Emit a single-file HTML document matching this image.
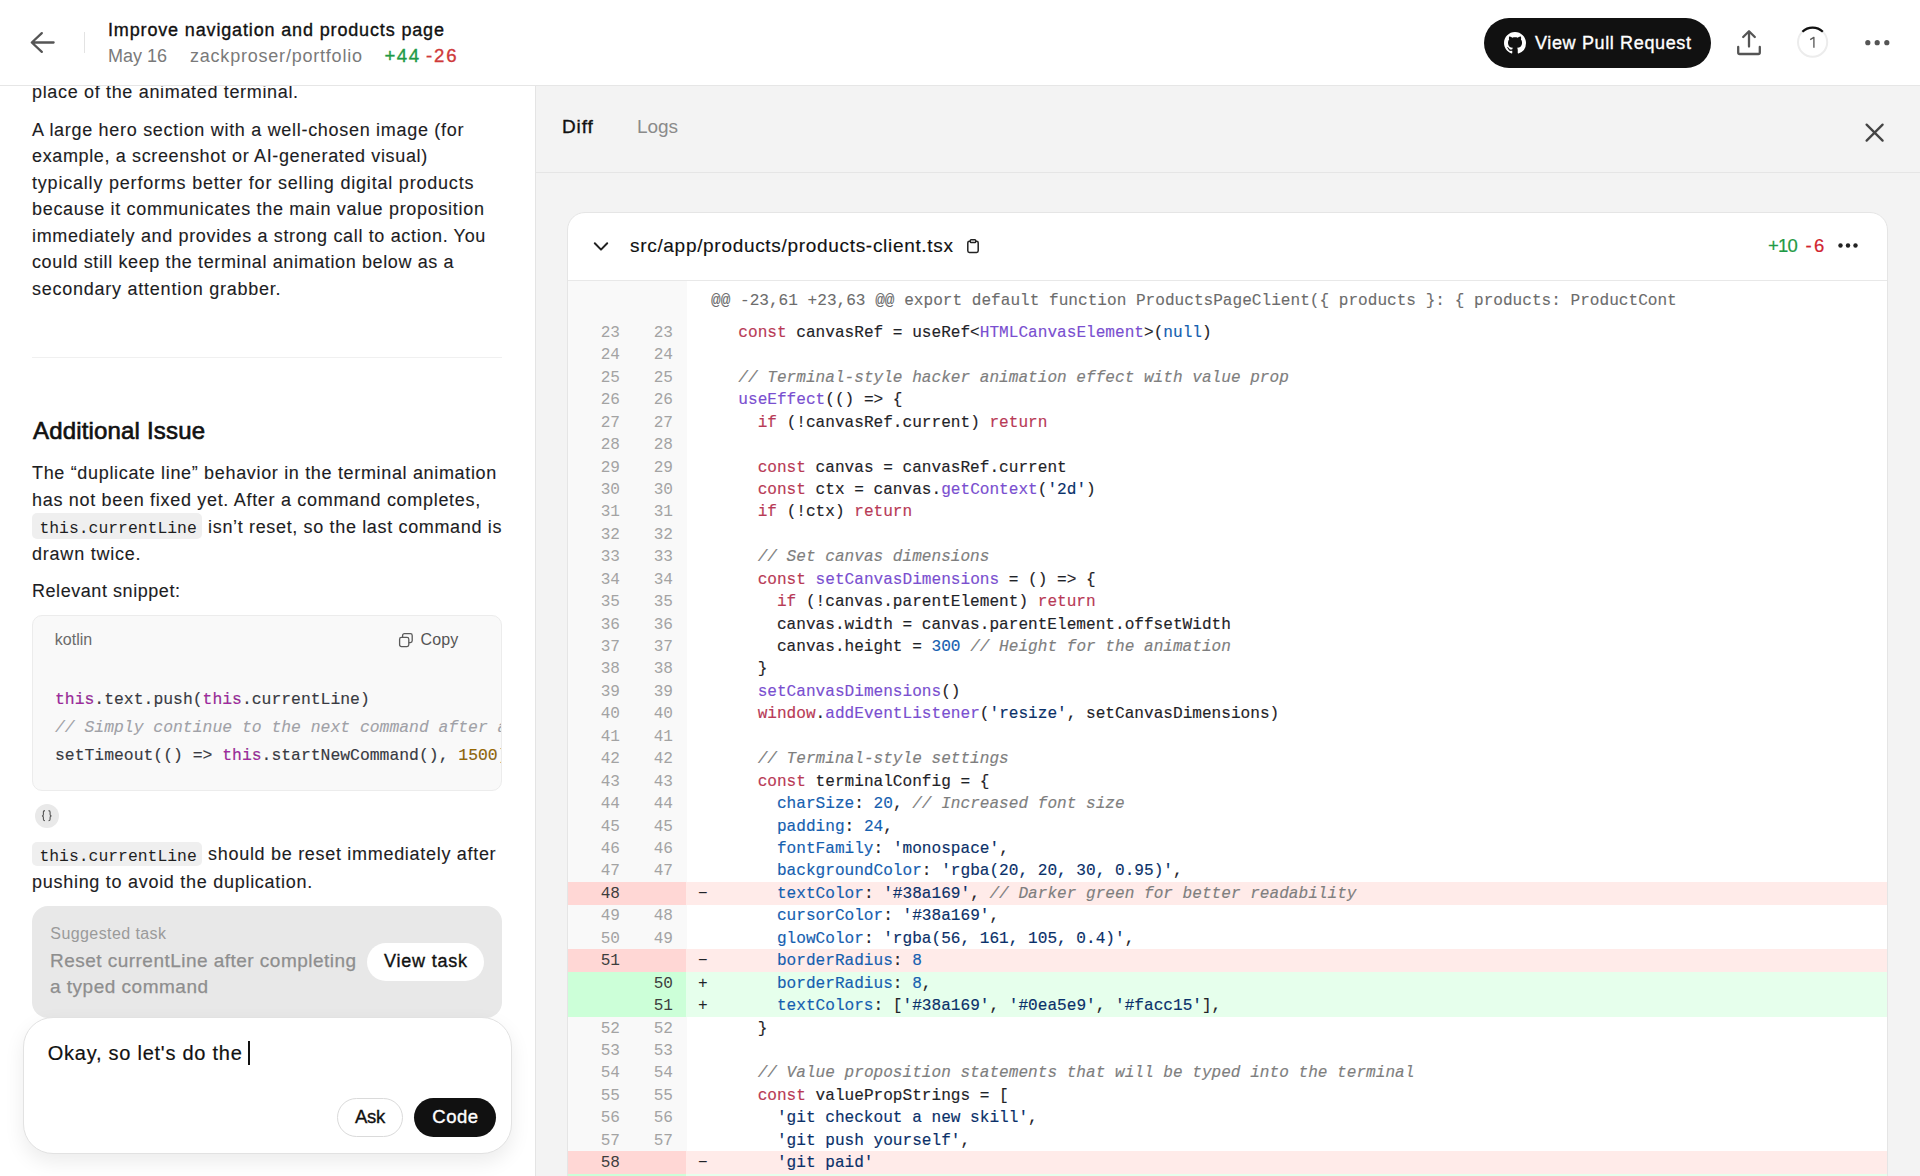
<!DOCTYPE html>
<html><head><meta charset="utf-8">
<style>
html,body{margin:0;padding:0;}
body{width:1920px;height:1176px;position:relative;overflow:hidden;background:#fff;font-family:"Liberation Sans",sans-serif;}
.a{position:absolute;box-sizing:border-box;}
.t{position:absolute;white-space:pre;}
.t i{font-style:italic}
#left{position:absolute;left:0;top:86px;width:535px;height:1090px;overflow:hidden;background:#fff;}
#left .in{position:absolute;left:0;top:-86px;width:535px;height:1176px;}
#right{position:absolute;left:535px;top:86px;width:1385px;height:1090px;background:#f3f3f3;border-left:1px solid #e4e4e4;box-sizing:border-box;overflow:hidden;}
#right .in{position:absolute;left:-536px;top:-86px;width:1920px;height:1176px;}
#hdr{position:absolute;left:0;top:0;width:1920px;height:86px;background:#fff;border-bottom:1px solid #e6e6e6;box-sizing:border-box;}
.card{position:absolute;left:567px;top:211.5px;width:1321px;height:1100px;background:#fff;border:1px solid #e5e5e5;border-radius:18px;box-sizing:border-box;overflow:hidden;}
.row{position:absolute;left:567px;width:1321px;height:22.44px;font-family:"Liberation Mono",monospace;font-size:16.1px;line-height:22.44px;white-space:pre;}
.row .g{position:absolute;left:1px;top:0;width:118px;height:100%;}
.row .cb{position:absolute;left:119px;top:0;right:1px;height:100%;}
.row .ln1{position:absolute;right:1268px;top:0.8px;}
.row .ln2{position:absolute;right:1215px;top:0.8px;}
.row .sg{position:absolute;left:131px;top:0.8px;color:#1f2328;}
.row .code{position:absolute;left:152px;top:0.8px;color:#1f2328;-webkit-text-stroke:0.15px currentColor;}
</style></head><body>
<div id="left"><div class="in">
  <div class="a" style="left:32px;top:356.6px;width:470px;height:1px;background:#f0f0f0"></div>
  <div class="a" style="left:32.2px;top:513.4px;width:169.5px;height:25.6px;background:#efefef;border-radius:5px"></div>
  <div class="a" style="left:32.2px;top:841.6px;width:169.5px;height:24.6px;background:#efefef;border-radius:5px"></div>
  <div class="a" style="left:32.3px;top:614.8px;width:469.5px;height:176.5px;background:#f9f9f9;border:1px solid #ececec;border-radius:10px;overflow:hidden"></div>
  <svg class="a" style="left:398px;top:632px" width="16" height="16" viewBox="0 0 16 16"><rect x="4.6" y="1.6" width="9.6" height="9" rx="1.8" fill="none" stroke="#5a5a5a" stroke-width="1.3"/><rect x="1.6" y="5.4" width="9.2" height="9.2" rx="1.8" fill="#f9f9f9" stroke="#5a5a5a" stroke-width="1.3"/></svg>
  <div class="a" style="left:34.7px;top:803.8px;width:24px;height:24px;background:#e9e9e9;border-radius:12px"></div>
  <svg class="a" style="left:38px;top:806px" width="18" height="18" viewBox="0 0 18 18"><path d="M7 4.6Q5.4 4.6 5.4 6V8.4Q5.4 9.8 4 9.9Q5.4 10 5.4 11.4V13.3Q5.4 14.7 7 14.7M10.5 4.6Q12.1 4.6 12.1 6V8.4Q12.1 9.8 13.5 9.9Q12.1 10 12.1 11.4V13.3Q12.1 14.7 10.5 14.7" fill="none" stroke="#555" stroke-width="1.1"/></svg>
  <div class="a" style="left:32px;top:905.5px;width:470px;height:112px;background:#e8e8e8;border-radius:16px"></div>
  <div class="a" style="left:367px;top:942.9px;width:116.7px;height:37.7px;background:#fff;border-radius:19px"></div>
  <div class="a" style="left:22.5px;top:1017.1px;width:489.4px;height:136.7px;background:#fff;border:1px solid #e2e2e2;border-radius:30px;box-shadow:0 8px 20px rgba(0,0,0,0.08)"></div>
  <div class="a" style="left:248px;top:1041.3px;width:1.6px;height:23.7px;background:#111"></div>
  <div class="a" style="left:336.7px;top:1097.6px;width:66px;height:39.4px;background:#fff;border:1px solid #dadada;border-radius:20px"></div>
  <div class="a" style="left:414.3px;top:1097.6px;width:81.3px;height:39.4px;background:#111;border-radius:20px"></div>
<div class="a" style="left:0;top:0;width:501px;height:1176px;overflow:hidden">
<div class='t' style='left:55.0px;top:689.18px;font-family:"Liberation Mono", monospace;font-size:16.4px;font-weight:400;white-space:pre;font-style:normal;line-height:21.32px;color:#383a42;-webkit-text-stroke:0.15px #383a42;'><i style="color:#a626a4;font-style:normal">this</i>.text.push(<i style="color:#a626a4;font-style:normal">this</i>.currentLine)</div>
<div class='t' style='left:55.0px;top:717.38px;font-family:"Liberation Mono", monospace;font-size:16.4px;font-weight:400;white-space:pre;font-style:normal;line-height:21.32px;color:#a0a1a7;-webkit-text-stroke:0.1px #a0a1a7;'><i style="color:#a0a1a7">// Simply continue to the next command after a delay</i></div>
<div class='t' style='left:55.0px;top:744.98px;font-family:"Liberation Mono", monospace;font-size:16.4px;font-weight:400;white-space:pre;font-style:normal;line-height:21.32px;color:#383a42;-webkit-text-stroke:0.15px #383a42;'>setTimeout(() =&gt; <i style="color:#a626a4;font-style:normal">this</i>.startNewCommand(), <i style="color:#986801;font-style:normal">1500</i>)</div>
</div>
<div class='t' style='left:32.0px;top:80.86px;font-family:"Liberation Sans", sans-serif;font-size:18px;font-weight:400;white-space:pre;font-style:normal;line-height:23.4px;color:#1d1d1f;letter-spacing:0.665px;-webkit-text-stroke:0.12px #1d1d1f;'>place of the animated terminal.</div>
<div class='t' style='left:32.0px;top:118.66px;font-family:"Liberation Sans", sans-serif;font-size:18px;font-weight:400;white-space:pre;font-style:normal;line-height:23.4px;color:#1d1d1f;letter-spacing:0.698px;-webkit-text-stroke:0.12px #1d1d1f;'>A large hero section with a well-chosen image (for</div>
<div class='t' style='left:32.0px;top:145.16px;font-family:"Liberation Sans", sans-serif;font-size:18px;font-weight:400;white-space:pre;font-style:normal;line-height:23.4px;color:#1d1d1f;letter-spacing:0.636px;-webkit-text-stroke:0.12px #1d1d1f;'>example, a screenshot or AI-generated visual)</div>
<div class='t' style='left:32.0px;top:171.66px;font-family:"Liberation Sans", sans-serif;font-size:18px;font-weight:400;white-space:pre;font-style:normal;line-height:23.4px;color:#1d1d1f;letter-spacing:0.798px;-webkit-text-stroke:0.12px #1d1d1f;'>typically performs better for selling digital products</div>
<div class='t' style='left:32.0px;top:198.16px;font-family:"Liberation Sans", sans-serif;font-size:18px;font-weight:400;white-space:pre;font-style:normal;line-height:23.4px;color:#1d1d1f;letter-spacing:0.687px;-webkit-text-stroke:0.12px #1d1d1f;'>because it communicates the main value proposition</div>
<div class='t' style='left:32.0px;top:224.66px;font-family:"Liberation Sans", sans-serif;font-size:18px;font-weight:400;white-space:pre;font-style:normal;line-height:23.4px;color:#1d1d1f;letter-spacing:0.655px;-webkit-text-stroke:0.12px #1d1d1f;'>immediately and provides a strong call to action. You</div>
<div class='t' style='left:32.0px;top:251.16px;font-family:"Liberation Sans", sans-serif;font-size:18px;font-weight:400;white-space:pre;font-style:normal;line-height:23.4px;color:#1d1d1f;letter-spacing:0.620px;-webkit-text-stroke:0.12px #1d1d1f;'>could still keep the terminal animation below as a</div>
<div class='t' style='left:32.0px;top:277.66px;font-family:"Liberation Sans", sans-serif;font-size:18px;font-weight:400;white-space:pre;font-style:normal;line-height:23.4px;color:#1d1d1f;letter-spacing:0.753px;-webkit-text-stroke:0.12px #1d1d1f;'>secondary attention grabber.</div>
<div class='t' style='left:33.0px;top:414.58px;font-family:"Liberation Sans", sans-serif;font-size:24px;font-weight:400;white-space:pre;font-style:normal;line-height:31.2px;color:#111;letter-spacing:0.170px;-webkit-text-stroke:0.65px #111;'>Additional Issue</div>
<div class='t' style='left:32.0px;top:462.46px;font-family:"Liberation Sans", sans-serif;font-size:18px;font-weight:400;white-space:pre;font-style:normal;line-height:23.4px;color:#1d1d1f;letter-spacing:0.668px;-webkit-text-stroke:0.12px #1d1d1f;'>The “duplicate line” behavior in the terminal animation</div>
<div class='t' style='left:32.0px;top:489.06px;font-family:"Liberation Sans", sans-serif;font-size:18px;font-weight:400;white-space:pre;font-style:normal;line-height:23.4px;color:#1d1d1f;letter-spacing:0.693px;-webkit-text-stroke:0.12px #1d1d1f;'>has not been fixed yet. After a command completes,</div>
<div class='t' style='left:208.1px;top:515.66px;font-family:"Liberation Sans", sans-serif;font-size:18px;font-weight:400;white-space:pre;font-style:normal;line-height:23.4px;color:#1d1d1f;letter-spacing:0.653px;-webkit-text-stroke:0.12px #1d1d1f;'>isn’t reset, so the last command is</div>
<div class='t' style='left:32.0px;top:542.66px;font-family:"Liberation Sans", sans-serif;font-size:18px;font-weight:400;white-space:pre;font-style:normal;line-height:23.4px;color:#1d1d1f;letter-spacing:0.778px;-webkit-text-stroke:0.12px #1d1d1f;'>drawn twice.</div>
<div class='t' style='left:32.0px;top:580.26px;font-family:"Liberation Sans", sans-serif;font-size:18px;font-weight:400;white-space:pre;font-style:normal;line-height:23.4px;color:#1d1d1f;letter-spacing:0.557px;-webkit-text-stroke:0.12px #1d1d1f;'>Relevant snippet:</div>
<div class='t' style='left:39.4px;top:517.98px;font-family:"Liberation Mono", monospace;font-size:16.4px;font-weight:400;white-space:pre;font-style:normal;line-height:21.32px;color:#1f1f1f;'>this.currentLine</div>
<div class='t' style='left:54.8px;top:630.06px;font-family:"Liberation Sans", sans-serif;font-size:16px;font-weight:400;white-space:pre;font-style:normal;line-height:20.8px;color:#6b6b6b;letter-spacing:0.008px;'>kotlin</div>
<div class='t' style='left:420.6px;top:630.06px;font-family:"Liberation Sans", sans-serif;font-size:16px;font-weight:400;white-space:pre;font-style:normal;line-height:20.8px;color:#555;letter-spacing:0.080px;'>Copy</div>
<div class='t' style='left:39.4px;top:845.78px;font-family:"Liberation Mono", monospace;font-size:16.4px;font-weight:400;white-space:pre;font-style:normal;line-height:21.32px;color:#1f1f1f;'>this.currentLine</div>
<div class='t' style='left:208.1px;top:843.46px;font-family:"Liberation Sans", sans-serif;font-size:18px;font-weight:400;white-space:pre;font-style:normal;line-height:23.4px;color:#1d1d1f;letter-spacing:0.699px;-webkit-text-stroke:0.12px #1d1d1f;'>should be reset immediately after</div>
<div class='t' style='left:32.0px;top:870.66px;font-family:"Liberation Sans", sans-serif;font-size:18px;font-weight:400;white-space:pre;font-style:normal;line-height:23.4px;color:#1d1d1f;letter-spacing:0.719px;-webkit-text-stroke:0.12px #1d1d1f;'>pushing to avoid the duplication.</div>
<div class='t' style='left:50.3px;top:923.66px;font-family:"Liberation Sans", sans-serif;font-size:16px;font-weight:400;white-space:pre;font-style:normal;line-height:20.8px;color:#9a9a9a;letter-spacing:0.416px;'>Suggested task</div>
<div class='t' style='left:50.0px;top:949.37px;font-family:"Liberation Sans", sans-serif;font-size:19px;font-weight:400;white-space:pre;font-style:normal;line-height:24.7px;color:#8e8e8e;letter-spacing:0.472px;-webkit-text-stroke:0.25px #8e8e8e;'>Reset currentLine after completing</div>
<div class='t' style='left:50.0px;top:975.07px;font-family:"Liberation Sans", sans-serif;font-size:19px;font-weight:400;white-space:pre;font-style:normal;line-height:24.7px;color:#8e8e8e;letter-spacing:0.500px;-webkit-text-stroke:0.25px #8e8e8e;'>a typed command</div>
<div class='t' style='left:384.0px;top:950.06px;font-family:"Liberation Sans", sans-serif;font-size:18px;font-weight:400;white-space:pre;font-style:normal;line-height:23.4px;color:#111;letter-spacing:0.787px;-webkit-text-stroke:0.35px #111;'>View task</div>
<div class='t' style='left:47.8px;top:1040.47px;font-family:"Liberation Sans", sans-serif;font-size:20px;font-weight:400;white-space:pre;font-style:normal;line-height:26.0px;color:#111;letter-spacing:0.745px;-webkit-text-stroke:0.2px #111;'>Okay, so let&#x27;s do the</div>
<div class='t' style='left:355.0px;top:1105.16px;font-family:"Liberation Sans", sans-serif;font-size:18.5px;font-weight:400;white-space:pre;font-style:normal;line-height:24.05px;color:#111;letter-spacing:-0.272px;-webkit-text-stroke:0.35px #111;'>Ask</div>
<div class='t' style='left:432.3px;top:1105.16px;font-family:"Liberation Sans", sans-serif;font-size:18.5px;font-weight:400;white-space:pre;font-style:normal;line-height:24.05px;color:#fff;letter-spacing:0.522px;-webkit-text-stroke:0.35px #fff;'>Code</div>
</div></div>
<div id="right"><div class="in">
  <div class="a" style="left:536px;top:172px;width:1384px;height:1px;background:#e5e5e5"></div>
  <svg class="a" style="left:1864px;top:122px" width="21" height="21" viewBox="0 0 21 21"><path d="M2.6 2.6L18.6 18.6M18.6 2.6L2.6 18.6" stroke="#444" stroke-width="2.3" stroke-linecap="round"/></svg>
  <div class="card">
    <div class="a" style="left:0;top:67.5px;width:1320px;height:1px;background:#e8e8e8"></div>
    <div class="a" style="left:0;top:68.5px;width:119px;height:1100px;background:#f9f9f9"></div>
  </div>
  <svg class="a" style="left:592px;top:239px" width="18" height="16" viewBox="0 0 18 16"><path d="M2.8 4.2L9 10.6L15.2 4.2" fill="none" stroke="#222" stroke-width="2" stroke-linecap="round" stroke-linejoin="round"/></svg>
  <svg class="a" style="left:965px;top:237px" width="16" height="18" viewBox="0 0 16 18"><rect x="2.8" y="4.2" width="10.4" height="11.2" rx="1.6" fill="none" stroke="#222" stroke-width="1.5"/><rect x="5.3" y="2.7" width="5.4" height="2.8" rx="0.8" fill="#fff" stroke="#222" stroke-width="1.4"/></svg>
  <svg class="a" style="left:1836px;top:240px" width="24" height="12" viewBox="0 0 24 12"><circle cx="4.5" cy="5.5" r="2.2" fill="#222"/><circle cx="12" cy="5.5" r="2.2" fill="#222"/><circle cx="19.5" cy="5.5" r="2.2" fill="#222"/></svg>
  <div class="t" style="left:711px;top:289.5px;font-family:'Liberation Mono',monospace;font-size:16.1px;line-height:22.44px;color:#6c6c6c;-webkit-text-stroke:0.1px #6c6c6c">@@ -23,61 +23,63 @@ export default function ProductsPageClient({ products }: { products: ProductCont</div>
<div class='row' style='top:321.10px'><div class='g' style='background:transparent'></div><div class='cb' style='background:transparent'></div><span class='ln1' style='color:#a3a3a3'>23</span><span class='ln2' style='color:#a3a3a3'>23</span><span class='sg'></span><span class='code'>  <span style='color:#b83a56;-webkit-text-stroke:0.15px #b83a56'>const</span> canvasRef = useRef&lt;<span style='color:#7a4fd0;-webkit-text-stroke:0.15px #7a4fd0'>HTMLCanvasElement</span>&gt;(<span style='color:#1560b0;-webkit-text-stroke:0.15px #1560b0'>null</span>)</span></div>
<div class='row' style='top:343.54px'><div class='g' style='background:transparent'></div><div class='cb' style='background:transparent'></div><span class='ln1' style='color:#a3a3a3'>24</span><span class='ln2' style='color:#a3a3a3'>24</span><span class='sg'></span><span class='code'></span></div>
<div class='row' style='top:365.98px'><div class='g' style='background:transparent'></div><div class='cb' style='background:transparent'></div><span class='ln1' style='color:#a3a3a3'>25</span><span class='ln2' style='color:#a3a3a3'>25</span><span class='sg'></span><span class='code'>  <span style='color:#7e7e7e;-webkit-text-stroke:0.15px #7e7e7e;font-style:italic'>// Terminal-style hacker animation effect with value prop</span></span></div>
<div class='row' style='top:388.42px'><div class='g' style='background:transparent'></div><div class='cb' style='background:transparent'></div><span class='ln1' style='color:#a3a3a3'>26</span><span class='ln2' style='color:#a3a3a3'>26</span><span class='sg'></span><span class='code'>  <span style='color:#7a4fd0;-webkit-text-stroke:0.15px #7a4fd0'>useEffect</span>(() =&gt; {</span></div>
<div class='row' style='top:410.86px'><div class='g' style='background:transparent'></div><div class='cb' style='background:transparent'></div><span class='ln1' style='color:#a3a3a3'>27</span><span class='ln2' style='color:#a3a3a3'>27</span><span class='sg'></span><span class='code'>    <span style='color:#b83a56;-webkit-text-stroke:0.15px #b83a56'>if</span> (!canvasRef.current) <span style='color:#b83a56;-webkit-text-stroke:0.15px #b83a56'>return</span></span></div>
<div class='row' style='top:433.30px'><div class='g' style='background:transparent'></div><div class='cb' style='background:transparent'></div><span class='ln1' style='color:#a3a3a3'>28</span><span class='ln2' style='color:#a3a3a3'>28</span><span class='sg'></span><span class='code'></span></div>
<div class='row' style='top:455.74px'><div class='g' style='background:transparent'></div><div class='cb' style='background:transparent'></div><span class='ln1' style='color:#a3a3a3'>29</span><span class='ln2' style='color:#a3a3a3'>29</span><span class='sg'></span><span class='code'>    <span style='color:#b83a56;-webkit-text-stroke:0.15px #b83a56'>const</span> canvas = canvasRef.current</span></div>
<div class='row' style='top:478.18px'><div class='g' style='background:transparent'></div><div class='cb' style='background:transparent'></div><span class='ln1' style='color:#a3a3a3'>30</span><span class='ln2' style='color:#a3a3a3'>30</span><span class='sg'></span><span class='code'>    <span style='color:#b83a56;-webkit-text-stroke:0.15px #b83a56'>const</span> ctx = canvas.<span style='color:#7a4fd0;-webkit-text-stroke:0.15px #7a4fd0'>getContext</span>(<span style='color:#0a3069;-webkit-text-stroke:0.15px #0a3069'>&#x27;2d&#x27;</span>)</span></div>
<div class='row' style='top:500.62px'><div class='g' style='background:transparent'></div><div class='cb' style='background:transparent'></div><span class='ln1' style='color:#a3a3a3'>31</span><span class='ln2' style='color:#a3a3a3'>31</span><span class='sg'></span><span class='code'>    <span style='color:#b83a56;-webkit-text-stroke:0.15px #b83a56'>if</span> (!ctx) <span style='color:#b83a56;-webkit-text-stroke:0.15px #b83a56'>return</span></span></div>
<div class='row' style='top:523.06px'><div class='g' style='background:transparent'></div><div class='cb' style='background:transparent'></div><span class='ln1' style='color:#a3a3a3'>32</span><span class='ln2' style='color:#a3a3a3'>32</span><span class='sg'></span><span class='code'></span></div>
<div class='row' style='top:545.50px'><div class='g' style='background:transparent'></div><div class='cb' style='background:transparent'></div><span class='ln1' style='color:#a3a3a3'>33</span><span class='ln2' style='color:#a3a3a3'>33</span><span class='sg'></span><span class='code'>    <span style='color:#7e7e7e;-webkit-text-stroke:0.15px #7e7e7e;font-style:italic'>// Set canvas dimensions</span></span></div>
<div class='row' style='top:567.94px'><div class='g' style='background:transparent'></div><div class='cb' style='background:transparent'></div><span class='ln1' style='color:#a3a3a3'>34</span><span class='ln2' style='color:#a3a3a3'>34</span><span class='sg'></span><span class='code'>    <span style='color:#b83a56;-webkit-text-stroke:0.15px #b83a56'>const</span> <span style='color:#7a4fd0;-webkit-text-stroke:0.15px #7a4fd0'>setCanvasDimensions</span> = () =&gt; {</span></div>
<div class='row' style='top:590.38px'><div class='g' style='background:transparent'></div><div class='cb' style='background:transparent'></div><span class='ln1' style='color:#a3a3a3'>35</span><span class='ln2' style='color:#a3a3a3'>35</span><span class='sg'></span><span class='code'>      <span style='color:#b83a56;-webkit-text-stroke:0.15px #b83a56'>if</span> (!canvas.parentElement) <span style='color:#b83a56;-webkit-text-stroke:0.15px #b83a56'>return</span></span></div>
<div class='row' style='top:612.82px'><div class='g' style='background:transparent'></div><div class='cb' style='background:transparent'></div><span class='ln1' style='color:#a3a3a3'>36</span><span class='ln2' style='color:#a3a3a3'>36</span><span class='sg'></span><span class='code'>      canvas.width = canvas.parentElement.offsetWidth</span></div>
<div class='row' style='top:635.26px'><div class='g' style='background:transparent'></div><div class='cb' style='background:transparent'></div><span class='ln1' style='color:#a3a3a3'>37</span><span class='ln2' style='color:#a3a3a3'>37</span><span class='sg'></span><span class='code'>      canvas.height = <span style='color:#1560b0;-webkit-text-stroke:0.15px #1560b0'>300</span> <span style='color:#7e7e7e;-webkit-text-stroke:0.15px #7e7e7e;font-style:italic'>// Height for the animation</span></span></div>
<div class='row' style='top:657.70px'><div class='g' style='background:transparent'></div><div class='cb' style='background:transparent'></div><span class='ln1' style='color:#a3a3a3'>38</span><span class='ln2' style='color:#a3a3a3'>38</span><span class='sg'></span><span class='code'>    }</span></div>
<div class='row' style='top:680.14px'><div class='g' style='background:transparent'></div><div class='cb' style='background:transparent'></div><span class='ln1' style='color:#a3a3a3'>39</span><span class='ln2' style='color:#a3a3a3'>39</span><span class='sg'></span><span class='code'>    <span style='color:#7a4fd0;-webkit-text-stroke:0.15px #7a4fd0'>setCanvasDimensions</span>()</span></div>
<div class='row' style='top:702.58px'><div class='g' style='background:transparent'></div><div class='cb' style='background:transparent'></div><span class='ln1' style='color:#a3a3a3'>40</span><span class='ln2' style='color:#a3a3a3'>40</span><span class='sg'></span><span class='code'>    <span style='color:#b83a56;-webkit-text-stroke:0.15px #b83a56'>window</span>.<span style='color:#7a4fd0;-webkit-text-stroke:0.15px #7a4fd0'>addEventListener</span>(<span style='color:#0a3069;-webkit-text-stroke:0.15px #0a3069'>&#x27;resize&#x27;</span>, setCanvasDimensions)</span></div>
<div class='row' style='top:725.02px'><div class='g' style='background:transparent'></div><div class='cb' style='background:transparent'></div><span class='ln1' style='color:#a3a3a3'>41</span><span class='ln2' style='color:#a3a3a3'>41</span><span class='sg'></span><span class='code'></span></div>
<div class='row' style='top:747.46px'><div class='g' style='background:transparent'></div><div class='cb' style='background:transparent'></div><span class='ln1' style='color:#a3a3a3'>42</span><span class='ln2' style='color:#a3a3a3'>42</span><span class='sg'></span><span class='code'>    <span style='color:#7e7e7e;-webkit-text-stroke:0.15px #7e7e7e;font-style:italic'>// Terminal-style settings</span></span></div>
<div class='row' style='top:769.90px'><div class='g' style='background:transparent'></div><div class='cb' style='background:transparent'></div><span class='ln1' style='color:#a3a3a3'>43</span><span class='ln2' style='color:#a3a3a3'>43</span><span class='sg'></span><span class='code'>    <span style='color:#b83a56;-webkit-text-stroke:0.15px #b83a56'>const</span> terminalConfig = {</span></div>
<div class='row' style='top:792.34px'><div class='g' style='background:transparent'></div><div class='cb' style='background:transparent'></div><span class='ln1' style='color:#a3a3a3'>44</span><span class='ln2' style='color:#a3a3a3'>44</span><span class='sg'></span><span class='code'>      <span style='color:#1560b0;-webkit-text-stroke:0.15px #1560b0'>charSize</span>: <span style='color:#1560b0;-webkit-text-stroke:0.15px #1560b0'>20</span>, <span style='color:#7e7e7e;-webkit-text-stroke:0.15px #7e7e7e;font-style:italic'>// Increased font size</span></span></div>
<div class='row' style='top:814.78px'><div class='g' style='background:transparent'></div><div class='cb' style='background:transparent'></div><span class='ln1' style='color:#a3a3a3'>45</span><span class='ln2' style='color:#a3a3a3'>45</span><span class='sg'></span><span class='code'>      <span style='color:#1560b0;-webkit-text-stroke:0.15px #1560b0'>padding</span>: <span style='color:#1560b0;-webkit-text-stroke:0.15px #1560b0'>24</span>,</span></div>
<div class='row' style='top:837.22px'><div class='g' style='background:transparent'></div><div class='cb' style='background:transparent'></div><span class='ln1' style='color:#a3a3a3'>46</span><span class='ln2' style='color:#a3a3a3'>46</span><span class='sg'></span><span class='code'>      <span style='color:#1560b0;-webkit-text-stroke:0.15px #1560b0'>fontFamily</span>: <span style='color:#0a3069;-webkit-text-stroke:0.15px #0a3069'>&#x27;monospace&#x27;</span>,</span></div>
<div class='row' style='top:859.66px'><div class='g' style='background:transparent'></div><div class='cb' style='background:transparent'></div><span class='ln1' style='color:#a3a3a3'>47</span><span class='ln2' style='color:#a3a3a3'>47</span><span class='sg'></span><span class='code'>      <span style='color:#1560b0;-webkit-text-stroke:0.15px #1560b0'>backgroundColor</span>: <span style='color:#0a3069;-webkit-text-stroke:0.15px #0a3069'>&#x27;rgba(20, 20, 30, 0.95)&#x27;</span>,</span></div>
<div class='row' style='top:882.10px'><div class='g' style='background:#ffd7d5'></div><div class='cb' style='background:#ffebe9'></div><span class='ln1' style='color:#3d3d3d'>48</span><span class='ln2' style='color:#3d3d3d'></span><span class='sg'>&minus;</span><span class='code'>      <span style='color:#1560b0;-webkit-text-stroke:0.15px #1560b0'>textColor</span>: <span style='color:#0a3069;-webkit-text-stroke:0.15px #0a3069'>&#x27;#38a169&#x27;</span>, <span style='color:#7e7e7e;-webkit-text-stroke:0.15px #7e7e7e;font-style:italic'>// Darker green for better readability</span></span></div>
<div class='row' style='top:904.54px'><div class='g' style='background:transparent'></div><div class='cb' style='background:transparent'></div><span class='ln1' style='color:#a3a3a3'>49</span><span class='ln2' style='color:#a3a3a3'>48</span><span class='sg'></span><span class='code'>      <span style='color:#1560b0;-webkit-text-stroke:0.15px #1560b0'>cursorColor</span>: <span style='color:#0a3069;-webkit-text-stroke:0.15px #0a3069'>&#x27;#38a169&#x27;</span>,</span></div>
<div class='row' style='top:926.98px'><div class='g' style='background:transparent'></div><div class='cb' style='background:transparent'></div><span class='ln1' style='color:#a3a3a3'>50</span><span class='ln2' style='color:#a3a3a3'>49</span><span class='sg'></span><span class='code'>      <span style='color:#1560b0;-webkit-text-stroke:0.15px #1560b0'>glowColor</span>: <span style='color:#0a3069;-webkit-text-stroke:0.15px #0a3069'>&#x27;rgba(56, 161, 105, 0.4)&#x27;</span>,</span></div>
<div class='row' style='top:949.42px'><div class='g' style='background:#ffd7d5'></div><div class='cb' style='background:#ffebe9'></div><span class='ln1' style='color:#3d3d3d'>51</span><span class='ln2' style='color:#3d3d3d'></span><span class='sg'>&minus;</span><span class='code'>      <span style='color:#1560b0;-webkit-text-stroke:0.15px #1560b0'>borderRadius</span>: <span style='color:#1560b0;-webkit-text-stroke:0.15px #1560b0'>8</span></span></div>
<div class='row' style='top:971.86px'><div class='g' style='background:#ccffd8'></div><div class='cb' style='background:#e6ffec'></div><span class='ln1' style='color:#3d3d3d'></span><span class='ln2' style='color:#3d3d3d'>50</span><span class='sg'>+</span><span class='code'>      <span style='color:#1560b0;-webkit-text-stroke:0.15px #1560b0'>borderRadius</span>: <span style='color:#1560b0;-webkit-text-stroke:0.15px #1560b0'>8</span>,</span></div>
<div class='row' style='top:994.30px'><div class='g' style='background:#ccffd8'></div><div class='cb' style='background:#e6ffec'></div><span class='ln1' style='color:#3d3d3d'></span><span class='ln2' style='color:#3d3d3d'>51</span><span class='sg'>+</span><span class='code'>      <span style='color:#1560b0;-webkit-text-stroke:0.15px #1560b0'>textColors</span>: [<span style='color:#0a3069;-webkit-text-stroke:0.15px #0a3069'>&#x27;#38a169&#x27;</span>, <span style='color:#0a3069;-webkit-text-stroke:0.15px #0a3069'>&#x27;#0ea5e9&#x27;</span>, <span style='color:#0a3069;-webkit-text-stroke:0.15px #0a3069'>&#x27;#facc15&#x27;</span>],</span></div>
<div class='row' style='top:1016.74px'><div class='g' style='background:transparent'></div><div class='cb' style='background:transparent'></div><span class='ln1' style='color:#a3a3a3'>52</span><span class='ln2' style='color:#a3a3a3'>52</span><span class='sg'></span><span class='code'>    }</span></div>
<div class='row' style='top:1039.18px'><div class='g' style='background:transparent'></div><div class='cb' style='background:transparent'></div><span class='ln1' style='color:#a3a3a3'>53</span><span class='ln2' style='color:#a3a3a3'>53</span><span class='sg'></span><span class='code'></span></div>
<div class='row' style='top:1061.62px'><div class='g' style='background:transparent'></div><div class='cb' style='background:transparent'></div><span class='ln1' style='color:#a3a3a3'>54</span><span class='ln2' style='color:#a3a3a3'>54</span><span class='sg'></span><span class='code'>    <span style='color:#7e7e7e;-webkit-text-stroke:0.15px #7e7e7e;font-style:italic'>// Value proposition statements that will be typed into the terminal</span></span></div>
<div class='row' style='top:1084.06px'><div class='g' style='background:transparent'></div><div class='cb' style='background:transparent'></div><span class='ln1' style='color:#a3a3a3'>55</span><span class='ln2' style='color:#a3a3a3'>55</span><span class='sg'></span><span class='code'>    <span style='color:#b83a56;-webkit-text-stroke:0.15px #b83a56'>const</span> valuePropStrings = [</span></div>
<div class='row' style='top:1106.50px'><div class='g' style='background:transparent'></div><div class='cb' style='background:transparent'></div><span class='ln1' style='color:#a3a3a3'>56</span><span class='ln2' style='color:#a3a3a3'>56</span><span class='sg'></span><span class='code'>      <span style='color:#0a3069;-webkit-text-stroke:0.15px #0a3069'>&#x27;git checkout a new skill&#x27;</span>,</span></div>
<div class='row' style='top:1128.94px'><div class='g' style='background:transparent'></div><div class='cb' style='background:transparent'></div><span class='ln1' style='color:#a3a3a3'>57</span><span class='ln2' style='color:#a3a3a3'>57</span><span class='sg'></span><span class='code'>      <span style='color:#0a3069;-webkit-text-stroke:0.15px #0a3069'>&#x27;git push yourself&#x27;</span>,</span></div>
<div class='row' style='top:1151.38px'><div class='g' style='background:#ffd7d5'></div><div class='cb' style='background:#ffebe9'></div><span class='ln1' style='color:#3d3d3d'>58</span><span class='ln2' style='color:#3d3d3d'></span><span class='sg'>&minus;</span><span class='code'>      <span style='color:#0a3069;-webkit-text-stroke:0.15px #0a3069'>&#x27;git paid&#x27;</span></span></div>
<div class='row' style='top:1173.82px'><div class='g' style='background:#ccffd8'></div><div class='cb' style='background:#e6ffec'></div><span class='ln1' style='color:#3d3d3d'></span><span class='ln2' style='color:#3d3d3d'>58</span><span class='sg'>+</span><span class='code'>      <span style='color:#0a3069;-webkit-text-stroke:0.15px #0a3069'>&#x27;git paid&#x27;</span>,</span></div>
<div class='t' style='left:562.0px;top:115.37px;font-family:"Liberation Sans", sans-serif;font-size:19px;font-weight:400;white-space:pre;font-style:normal;line-height:24.7px;color:#111;letter-spacing:0.843px;-webkit-text-stroke:0.35px #111;'>Diff</div>
<div class='t' style='left:637.0px;top:115.37px;font-family:"Liberation Sans", sans-serif;font-size:19px;font-weight:400;white-space:pre;font-style:normal;line-height:24.7px;color:#8a8a8a;letter-spacing:-0.068px;'>Logs</div>
<div class='t' style='left:630.0px;top:234.27px;font-family:"Liberation Sans", sans-serif;font-size:19px;font-weight:400;white-space:pre;font-style:normal;line-height:24.7px;color:#111;letter-spacing:0.690px;-webkit-text-stroke:0.15px #111;'>src/app/products/products-client.tsx</div>
<div class='t' style='left:1768.0px;top:233.96px;font-family:"Liberation Sans", sans-serif;font-size:18.5px;font-weight:400;white-space:pre;font-style:normal;line-height:24.05px;color:#1f9a45;letter-spacing:-0.845px;-webkit-text-stroke:0.2px #1f9a45;'>+10</div>
<div class='t' style='left:1805.5px;top:233.96px;font-family:"Liberation Sans", sans-serif;font-size:18.5px;font-weight:400;white-space:pre;font-style:normal;line-height:24.05px;color:#d1242f;letter-spacing:2.347px;-webkit-text-stroke:0.2px #d1242f;'>-6</div>
</div></div>
<div id="hdr">
  <svg class="a" style="left:28px;top:29px" width="30" height="28" viewBox="0 0 30 28"><path d="M25.6 13.5H4M13.8 4.1L3.8 13.5L13.8 22.9" fill="none" stroke="#555" stroke-width="2.3" stroke-linecap="round" stroke-linejoin="round"/></svg>
  <div class="a" style="left:84px;top:32px;width:1.2px;height:21px;background:#e3e3e3"></div>
  <div class="a" style="left:1484px;top:17.5px;width:227px;height:50px;background:#111;border-radius:25px"></div>
  <svg class="a" style="left:1504px;top:31.5px" width="22" height="22" viewBox="0 0 16 16"><path fill="#fff" d="M8 0C3.58 0 0 3.58 0 8c0 3.54 2.29 6.53 5.47 7.59.4.07.55-.17.55-.38 0-.19-.01-.82-.01-1.49-2.01.37-2.53-.49-2.69-.94-.09-.23-.48-.94-.82-1.13-.28-.15-.68-.52-.01-.53.63-.01 1.08.58 1.23.82.72 1.21 1.87.87 2.33.66.07-.52.28-.87.51-1.07-1.78-.2-3.64-.89-3.64-3.95 0-.87.31-1.59.82-2.15-.08-.2-.36-1.02.08-2.12 0 0 .67-.21 2.2.82.64-.18 1.32-.27 2-.27.68 0 1.36.09 2 .27 1.53-1.04 2.2-.82 2.2-.82.44 1.1.16 1.92.08 2.12.51.56.82 1.27.82 2.15 0 3.07-1.87 3.75-3.65 3.95.29.25.54.73.54 1.48 0 1.07-.01 1.93-.01 2.2 0 .21.15.46.55.38A8.013 8.013 0 0016 8c0-4.42-3.58-8-8-8z"/></svg>
  <svg class="a" style="left:1734px;top:28px" width="30" height="30" viewBox="0 0 30 30"><path d="M15 3.5V18.5M9.2 9L15 3.2L20.8 9M4.2 19V24.5Q4.2 26 5.7 26H24.3Q25.8 26 25.8 24.5V19" fill="none" stroke="#555" stroke-width="2.3" stroke-linecap="round" stroke-linejoin="round"/></svg>
  <svg class="a" style="left:1795px;top:25px" width="36" height="36" viewBox="0 0 36 36"><circle cx="17.6" cy="17.2" r="14.6" fill="none" stroke="#ececec" stroke-width="2"/><path d="M7.4 6.8A14.6 14.6 0 0 1 27.8 6.8" fill="none" stroke="#111" stroke-width="2.2"/></svg>
  <svg class="a" style="left:1800px;top:30px" width="24" height="24" viewBox="0 0 24 24"><path d="M10.2 9.6L13.9 7.4V17.8" fill="none" stroke="#5a5a5a" stroke-width="1.35" stroke-linejoin="round"/></svg>
  <svg class="a" style="left:1860px;top:36px" width="34" height="14" viewBox="0 0 34 14"><circle cx="7.8" cy="6.7" r="2.6" fill="#555"/><circle cx="17.2" cy="6.7" r="2.6" fill="#555"/><circle cx="26.8" cy="6.7" r="2.6" fill="#555"/></svg>
<div class='t' style='left:108.0px;top:19.06px;font-family:"Liberation Sans", sans-serif;font-size:18px;font-weight:400;white-space:pre;font-style:normal;line-height:23.4px;color:#111;letter-spacing:0.851px;-webkit-text-stroke:0.35px #111;'>Improve navigation and products page</div>
<div class='t' style='left:108.0px;top:44.86px;font-family:"Liberation Sans", sans-serif;font-size:18px;font-weight:400;white-space:pre;font-style:normal;line-height:23.4px;color:#7a7a7a;letter-spacing:-0.006px;'>May 16</div>
<div class='t' style='left:190.0px;top:44.86px;font-family:"Liberation Sans", sans-serif;font-size:18px;font-weight:400;white-space:pre;font-style:normal;line-height:23.4px;color:#7a7a7a;letter-spacing:0.785px;'>zackproser/portfolio</div>
<div class='t' style='left:384.5px;top:44.27px;font-family:"Liberation Sans", sans-serif;font-size:18.6px;font-weight:400;white-space:pre;font-style:normal;line-height:24.18px;color:#1f9a47;letter-spacing:1.477px;-webkit-text-stroke:0.35px #1f9a47;'>+44</div>
<div class='t' style='left:426.0px;top:44.27px;font-family:"Liberation Sans", sans-serif;font-size:18.6px;font-weight:400;white-space:pre;font-style:normal;line-height:24.18px;color:#cf3a3a;letter-spacing:1.812px;-webkit-text-stroke:0.35px #cf3a3a;'>-26</div>
<div class='t' style='left:1535.0px;top:31.66px;font-family:"Liberation Sans", sans-serif;font-size:18px;font-weight:400;white-space:pre;font-style:normal;line-height:23.4px;color:#fff;letter-spacing:0.641px;-webkit-text-stroke:0.35px #fff;'>View Pull Request</div>
</div>
</body></html>
